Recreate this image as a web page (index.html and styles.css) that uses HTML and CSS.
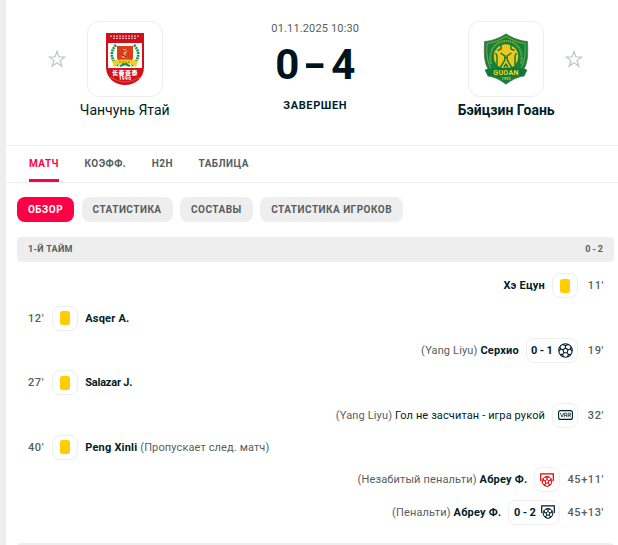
FILE: index.html
```html
<!DOCTYPE html>
<html lang="ru">
<head>
<meta charset="utf-8">
<title>Чанчунь Ятай - Бэйцзин Гоань</title>
<link rel="stylesheet" href="styles.css">
</head>
<body>
<svg class="defs" width="0" height="0" aria-hidden="true">
  <symbol id="star" viewBox="0 0 18 18"><path d="M9 1.400 10.900 7H16.800L12 10.500 13.900 16.200 9 12.700 4.100 16.200 6 10.500 1.200 7H7.100Z" fill="none" stroke="currentColor" stroke-width="1.200"/></symbol>
  <symbol id="ball" viewBox="0 0 16 16">
    <g fill="none" stroke="currentColor" stroke-width="1.150" stroke-linejoin="round">
      <circle cx="8" cy="8" r="7.200"/>
      <path d="M8 5.300 10.700 7.200 9.700 10.400H6.300L5.300 7.200ZM8 5.300V3M10.700 7.200 13 6.300M9.700 10.400 11.200 12.400M6.300 10.400 4.800 12.400M5.300 7.200 3 6.300M5.300 1.600 8 3 10.700 1.600M14 4.300 13 6.300 15 8.600M13.600 12 11.200 12.400 10 14.700M6 14.700 4.800 12.400 2.400 12M1 8.600 3 6.300 2 4.300"/>
    </g>
  </symbol>
  <symbol id="penalty" viewBox="0 0 14 14">
    <path d="M.7 8V.8H13.300V8" fill="none" stroke="currentColor" stroke-width="1.200"/>
    <g fill="none" stroke="currentColor" stroke-width="1">
      <circle cx="7" cy="8.400" r="4.900"/>
      <path d="M7 6.500 8.900 7.900 8.200 10.100H5.800L5.100 7.900ZM7 6.500V5.100L5 4M7 5.100 9 4M8.900 7.900 10.400 7.400 11.700 9M10.400 7.400 10.800 5.600M8.200 10.100 9.100 11.400 8.500 12.900M9.100 11.400 10.900 11.200M5.800 10.100 4.900 11.400 5.500 12.900M4.900 11.400 3.100 11.200M5.100 7.900 3.600 7.400 2.300 9M3.600 7.400 3.200 5.600"/>
    </g>
  </symbol>
</svg>
<main class="page">
  <header class="match">
    <svg class="star"><use href="#star"/></svg>
    <div class="team">
      <div class="crest">
        <svg width="38" height="52" viewBox="0 0 38 52">
          <path d="M0 0H38V34C38 45 29 52 19 52S0 45 0 34Z" fill="#d2101c"/>
          <path d="M2 10H36V35H2Z" fill="#fff"/>
          <path d="M4 3.200H34M7 5.300H31" stroke="#f3b0b4" stroke-width="1.200" stroke-dasharray="2 1"/>
          <path d="M10 12C4 18 4 27 13 33M28 12C34 18 34 27 25 33" fill="none" stroke="#15904a" stroke-width="2.600" stroke-dasharray="2 .7"/>
          <path d="M11 13H27V24C27 28 23 31 19 32 15 31 11 28 11 24Z" fill="#dd3c14"/>
          <path d="M17 16 20 16 21 19 19 22 22 24 17 25 15 23 18 21Z" fill="#f0a080"/>
          <path d="M17 18H20M16 22 21 24" stroke="#8d1418"/>
          <path d="M6 28C14 26 24 26 32 28L30 34 25 31C21 30 17 30 13 31L8 34Z" fill="#edcf25"/>
          <path d="M13 29H25" stroke="#9a7a15" stroke-width="1.200" stroke-dasharray="2 1"/>
          <path d="M14 33 19 31 24 33" fill="none" stroke="#15904a" stroke-width="2"/>
          <path d="M4 44Q19 54 34 44" fill="none" stroke="#e8702a" stroke-width=".7"/>
          <text x="19" y="41.800" class="crest-cn">长春亚泰</text>
          <text x="19" y="47.400" class="crest-year">1996</text>
        </svg>
      </div>
      <div class="team-name home-name">Чанчунь Ятай</div>
    </div>
    <div class="result">
      <div class="date">01.11.2025 10:30</div>
      <div class="score"><span>0</span><span class="dash">-</span><span>4</span></div>
      <div class="status">ЗАВЕРШЕН</div>
    </div>
    <div class="team">
      <div class="crest">
        <svg width="46" height="52" viewBox="0 0 46 52">
          <path d="M23 .8C17 5 9 8 1.500 8.500 1 20 1 29 5 36L2 37 5 43C11 44 16 46 23 51.200 30 46 35 44 41 43L44 37 41 36C45 29 45 20 44.500 8.500 37 8 29 5 23 .8Z" fill="#11813c" stroke="#55705a" stroke-width=".8"/>
          <path d="M23 3.500C17 7 10 10 4 10.500 3.500 20 4 29 8 35M23 3.500C29 7 36 10 42 10.500 42.500 20 42 29 38 35" fill="none" stroke="#b9bb2f" stroke-width=".7"/>
          <path d="M8 31C5 18 12 8 23 8S41 18 38 31" fill="none" stroke="#8aab3b" stroke-width="2" stroke-dasharray="1.300 .8"/>
          <circle cx="23" cy="23.500" r="12.200" fill="#f3c51d"/>
          <path d="M18 10.500V16L14.500 17.500M28 10.500V16L31.500 17.500M17.500 20 21.800 23V27L17 35M28.500 20 24.200 23V27L29 35M21.500 24.500H24.500M12.500 20 14 23V32M33.500 20 32 23V32M21 34 23 31 25 34" fill="none" stroke="#11813c" stroke-width="1.500"/>
          <path d="M3 37Q23 32 43 37L41 43Q23 38 5 43Z" fill="#0d7838"/>
          <text x="23" y="41.500" class="crest-guoan">GUOAN</text>
          <text x="23" y="46.800" class="crest-1992">1992</text>
        </svg>
      </div>
      <div class="team-name away-name">Бэйцзин Гоань</div>
    </div>
    <svg class="star"><use href="#star"/></svg>
  </header>

  <nav class="tabs">
    <a class="tab active">МАТЧ</a>
    <a class="tab">КОЭФФ.</a>
    <a class="tab">H2H</a>
    <a class="tab">ТАБЛИЦА</a>
  </nav>

  <nav class="pills">
    <a class="pill active">ОБЗОР</a>
    <a class="pill">СТАТИСТИКА</a>
    <a class="pill">СОСТАВЫ</a>
    <a class="pill">СТАТИСТИКА ИГРОКОВ</a>
  </nav>

  <section class="timeline">
    <div class="period"><span>1-Й ТАЙМ</span><span class="period-score">0 - 2</span></div>
    <div class="events">
      <div class="event away"><span class="time">11'</span><span class="badge"><i class="card"></i></span><span class="text"><b>Хэ Ецун</b></span></div>
      <div class="event"><span class="time">12'</span><span class="badge"><i class="card"></i></span><span class="text"><b>Asqer A.</b></span></div>
      <div class="event away"><span class="time">19'</span><span class="badge wide"><b class="goal">0 - 1</b><svg class="ball"><use href="#ball"/></svg></span><span class="text"><span class="note">(Yang Liyu)</span> <b>Серхио</b></span></div>
      <div class="event"><span class="time">27'</span><span class="badge"><i class="card"></i></span><span class="text"><b class="tight">Salazar J.</b></span></div>
      <div class="event away"><span class="time">32'</span><span class="badge"><svg class="var" viewBox="0 0 15 10"><rect x=".6" y=".6" width="13.800" height="8.800" rx="2" fill="none" stroke="currentColor" stroke-width="1.100"/><path d="M2.300 3 4 7 5.700 3M6.200 7.200V3.200H8.700V7.200M6.200 5.400H8.700M10.200 7.200V3.200H12.500V5.200H10.200M11.300 5.200 12.700 7.200" fill="none" stroke="currentColor" stroke-width=".7"/></svg></span><span class="text"><span class="note">(Yang Liyu)</span> Гол не засчитан - игра рукой</span></div>
      <div class="event"><span class="time">40'</span><span class="badge"><i class="card"></i></span><span class="text"><b>Peng Xinli</b> <span class="note">(Пропускает след. матч)</span></span></div>
      <div class="event away"><span class="time">45+11'</span><span class="badge"><svg class="penalty missed"><use href="#penalty"/></svg></span><span class="text"><span class="note">(Незабитый пенальти)</span> <b>Абреу Ф.</b></span></div>
      <div class="event away"><span class="time">45+13'</span><span class="badge wide"><b class="goal">0 - 2</b><svg class="penalty"><use href="#penalty"/></svg></span><span class="text"><span class="note">(Пенальти)</span> <b>Абреу Ф.</b></span></div>
    </div>
    <div class="period"></div>
  </section>
</main>
</body>
</html>
```
FILE: styles.css
```css
* { box-sizing: border-box; }
body {
  margin: 0;
  height: 545px;
  overflow: hidden;
  background: #eee;
  color: #001e28;
  font-family: Roboto, "Noto Sans CJK SC", sans-serif;
}
.defs { display: block; }
.page { margin-left: 6px; height: 545px; background: #fff; overflow: hidden; }

.match {
  display: grid;
  grid-template-columns: 17px 119.5px 261.5px 119.5px 17px;
  height: 146px;
  padding: 21px 0 0 42px;
  border-bottom: 1px solid #eee;
}
.star { width: 18px; height: 18px; margin-top: 29px; color: #c0c5c7; }
.star:last-child { margin-left: -.5px; }
.team { display: flex; flex-direction: column; align-items: center; }
.crest {
  display: flex;
  align-items: center;
  justify-content: center;
  width: 76px;
  height: 76px;
  border: 1px solid #eee;
  border-radius: 12px;
}
.crest-cn { font: 900 6px "Noto Sans CJK SC", sans-serif; fill: #fff; text-anchor: middle; letter-spacing: .5px; }
.crest-year { font: bold 5px Roboto, sans-serif; fill: #fff; text-anchor: middle; letter-spacing: .3px; }
.crest-guoan { font: bold 7px Roboto, sans-serif; fill: #f0d927; text-anchor: middle; letter-spacing: .3px; }
.crest-1992 { font: bold 4px Roboto, sans-serif; fill: #d3c62f; text-anchor: middle; }
.team-name { margin-top: 4px; font-size: 14px; line-height: 19px; white-space: nowrap; }
.away-name { font-weight: 700; padding-left: 1px; }
.result { display: flex; flex-direction: column; align-items: center; padding-top: 1px; }
.date { font-size: 11px; line-height: 14px; color: #555e61; letter-spacing: .15px; }
.score {
  display: flex;
  justify-content: center;
  align-items: center;
  height: 50px;
  margin-top: 4px;
  font-size: 42px;
  line-height: 50px;
  font-weight: 700;
  color: #00141e;
}
.dash { width: 32px; text-align: center; transform: scaleX(1.5); }
.status { margin-top: 9px; font-size: 11px; line-height: 14px; font-weight: 700; letter-spacing: .6px; }

.tabs { display: flex; gap: 25.5px; height: 37px; padding-left: 23px; border-bottom: 1px solid #eee; }
.tab {
  height: 36px;
  font-size: 10px;
  line-height: 35px;
  font-weight: 700;
  letter-spacing: .47px;
  color: #555e61;
}
.tab.active { color: #ff0046; border-bottom: 3px solid #ff0046; border-radius: 2px 2px 0 0; }

.pills { display: flex; gap: 7.5px; padding: 14px 0 15px 11px; }
.pill {
  height: 25px;
  padding: 0 11px;
  border-radius: 8px;
  background: #eee;
  color: #555e61;
  font-size: 10px;
  line-height: 25px;
  font-weight: 700;
  letter-spacing: .48px;
}
.pill.active { background: #ff0046; color: #fff; }

.timeline { margin: 0 4px 0 11px; }
.period {
  display: flex;
  justify-content: space-between;
  height: 25px;
  padding: 0 11px;
  border-radius: 4px;
  background: #eee;
  color: #555e61;
  font-size: 9px;
  line-height: 25px;
  font-weight: 700;
  letter-spacing: .3px;
}
.period-score { letter-spacing: 0; word-spacing: -.3px; }
.events { height: 281px; padding-top: 7.5px; }
.event {
  display: flex;
  align-items: center;
  gap: 7.5px;
  height: 32.35px;
  padding: 0 11px;
  font-size: 11px;
  letter-spacing: .12px;
  white-space: nowrap;
}
.event.away { flex-direction: row-reverse; padding-right: 10px; gap: 7px; }
.time { min-width: 16px; font-weight: 500; color: #555e61; letter-spacing: .6px; }
.away .time { min-width: 19px; text-align: right; }
.text b { letter-spacing: .22px; }
.text .tight { letter-spacing: -.2px; }
.away .note { letter-spacing: .15px; }
.badge {
  display: flex;
  align-items: center;
  justify-content: center;
  width: 26px;
  height: 25px;
  border: 1px solid #eee;
  border-radius: 8px;
}
.badge.wide { width: 52px; gap: 5px; }
.goal { letter-spacing: 0; word-spacing: -.3px; }
.card { width: 10px; height: 14px; border-radius: 2.5px; background: #ffcd00; }
.ball { width: 15px; height: 15px; }
.var { width: 15px; height: 10px; }
.penalty { width: 14px; height: 14px; }
.missed { color: #dc0000; }
.note { color: #555e61; }
```
